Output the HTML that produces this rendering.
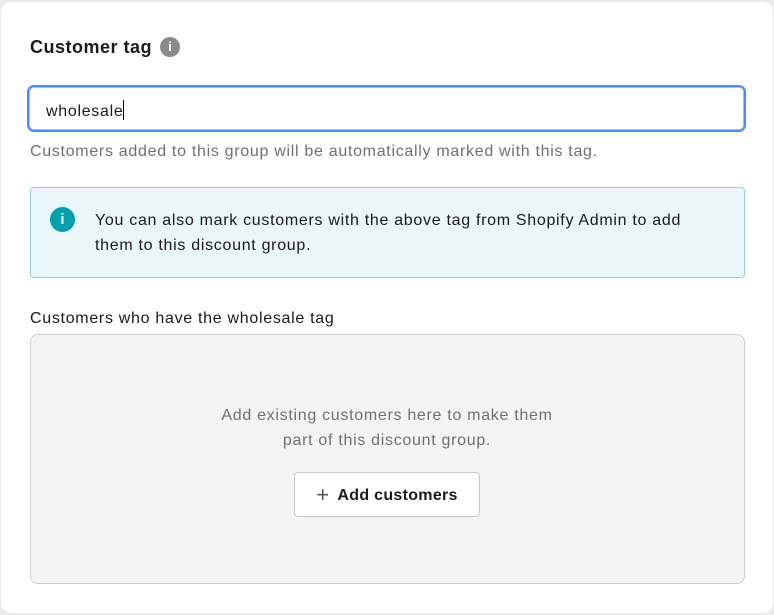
<!DOCTYPE html>
<html><head><style>
body{margin:0;width:774px;height:615px;background:#ebebeb;font-family:"Liberation Sans",sans-serif;position:relative;overflow:hidden;letter-spacing:0.7px}
.card{position:absolute;left:1px;top:2px;width:772px;height:611px;background:#fff;border-radius:10px}
.a{position:absolute}
</style></head><body>
<div class="card"></div>
<div class="a" style="left:30px;top:37px;font-size:18px;font-weight:bold;color:#1a1a1a;letter-spacing:0.5px">Customer tag</div>
<div class="a" style="left:160px;top:37px;width:20px;height:20px;border-radius:50%;background:#8a8a8a;color:#fff;font-size:13px;font-weight:bold;text-align:center;line-height:20px;letter-spacing:0">i</div>
<div class="a" style="left:27px;top:85px;width:715px;height:43px;border:2px solid #4a8ef5;border-radius:7px;box-shadow:inset 0 0 0 1px #bbb"></div>
<div class="a" style="left:46px;top:100px;font-size:16px;color:#1a1a1a">wholesale<span style="display:inline-block;width:1px;height:20px;background:#000;vertical-align:-4px"></span></div>
<div class="a" style="left:30px;top:143px;font-size:16px;color:#707070">Customers added to this group will be automatically marked with this tag.</div>
<div class="a" style="left:30px;top:187px;width:713px;height:89px;background:#e9f7fb;border:1px solid #98ced9;border-radius:4px"></div>
<div class="a" style="left:50px;top:207px;width:25px;height:25px;border-radius:50%;background:#00a0ac;color:#fff;font-size:15px;font-weight:bold;text-align:center;line-height:25px;letter-spacing:0">i</div>
<div class="a" style="left:95px;top:208px;font-size:16px;line-height:25px;color:#1a1a1a;width:610px">You can also mark customers with the above tag from Shopify Admin to add them to this discount group.</div>
<div class="a" style="left:30px;top:310px;font-size:16px;color:#1a1a1a">Customers who have the wholesale tag</div>
<div class="a" style="left:30px;top:334px;width:713px;height:248px;background:#f4f4f4;border:1px solid #cfcfcf;border-radius:8px"></div>
<div class="a" style="left:180px;top:403px;width:414px;text-align:center;font-size:16px;line-height:25px;color:#707070">Add existing customers here to make them<br>part of this discount group.</div>
<div class="a" style="left:294px;top:472px;width:184px;height:43px;background:#fff;border:1px solid #c9c9c9;border-radius:4px;text-align:center;line-height:43px;font-size:16px;font-weight:bold;color:#1a1a1a;letter-spacing:0.3px;white-space:nowrap"><span style="font-weight:normal;font-size:22px;color:#555;vertical-align:-2px;margin-right:8px">+</span>Add customers</div>
</body></html>
